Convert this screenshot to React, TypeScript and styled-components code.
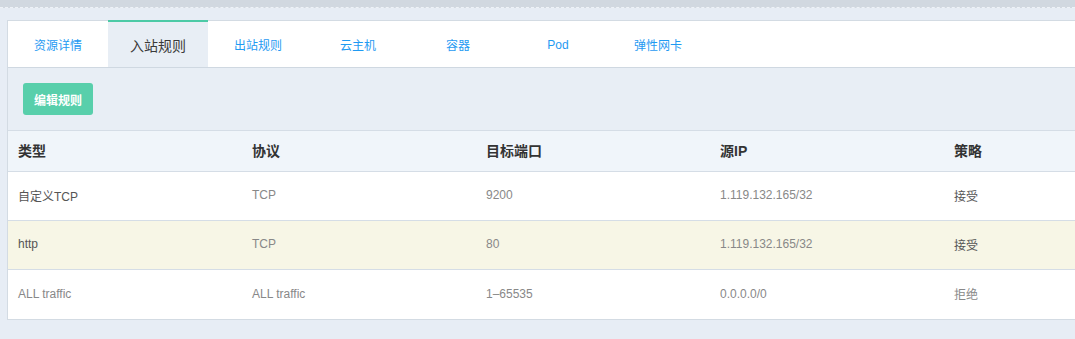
import styled, { createGlobalStyle } from "styled-components";

const GlobalStyle = createGlobalStyle`
  html, body {
    margin: 0;
    padding: 0;
    background: #e7edf5;
    overflow: hidden;
    font-family: "Liberation Sans", "Noto Sans CJK SC", sans-serif;
  }
`;

const tabs = ["资源详情", "入站规则", "出站规则", "云主机", "容器", "Pod", "弹性网卡"];

interface IRule {
  type: string;
  protocol: string;
  port: string;
  source: string;
  policy: string;
  muted?: boolean;
  hover?: boolean;
}

const rules: IRule[] = [
  { type: "自定义TCP", protocol: "TCP", port: "9200", source: "1.119.132.165/32", policy: "接受" },
  { type: "http", protocol: "TCP", port: "80", source: "1.119.132.165/32", policy: "接受", hover: true },
  { type: "ALL traffic", protocol: "ALL traffic", port: "1–65535", source: "0.0.0.0/0", policy: "拒绝", muted: true },
];

export default function App() {
  return (
    <>
      <GlobalStyle />
      <TopStrip />
      <Page>
        <Panel>
          <TabBar>
            {tabs.map((t, i) => (
              <Tab key={t} $active={i === 1}>
                {t}
              </Tab>
            ))}
          </TabBar>
          <Toolbar>
            <EditButton>编辑规则</EditButton>
          </Toolbar>
          <Table>
            <thead>
              <tr>
                <Th>类型</Th>
                <Th>协议</Th>
                <Th>目标端口</Th>
                <Th>源IP</Th>
                <Th>策略</Th>
              </tr>
            </thead>
            <tbody>
              {rules.map((r, i) => (
                <Row key={i} $hover={r.hover}>
                  <Td $dark={!r.muted}>{r.type}</Td>
                  <Td>{r.protocol}</Td>
                  <Td>{r.port}</Td>
                  <Td>{r.source}</Td>
                  <Td $dark={!r.muted}>{r.policy}</Td>
                </Row>
              ))}
            </tbody>
          </Table>
        </Panel>
      </Page>
    </>
  );
}

const TopStrip = styled.div`
  height: 7px;
  background: #d1d8e0;
  border-bottom: 1px dashed #eef2f7;
`;

const Page = styled.main`
  padding: 12px 0 20px 7px;
  overflow: hidden;
`;

const Panel = styled.section`
  width: 1180px;
  background: #e8eef5;
  border: 1px solid #d3dbe3;
`;

const TabBar = styled.nav`
  display: flex;
  height: 46px;
  background: #fff;
  border-bottom: 1px solid #cfd8e1;
`;

const Tab = styled.div<{ $active?: boolean }>`
  width: 100px;
  box-sizing: border-box;
  display: flex;
  align-items: center;
  justify-content: center;
  font-size: ${(p) => (p.$active ? "14px" : "12px")};
  color: ${(p) => (p.$active ? "#3a3a3a" : "#1f9af2")};
  background: ${(p) => (p.$active ? "#e8eef5" : "transparent")};
  border-top: 2px solid ${(p) => (p.$active ? "#4ccaa6" : "transparent")};
  height: 47px;
  margin-top: -1px;
  cursor: pointer;
`;

const Toolbar = styled.div`
  padding: 15px;
`;

const EditButton = styled.button`
  height: 32px;
  padding: 0 11px;
  border: none;
  border-radius: 3px;
  background: #58cfab;
  color: #fff;
  font-family: inherit;
  font-size: 12px;
  font-weight: bold;
  display: block;
`;

const Table = styled.table`
  width: 1170px;
  border-collapse: collapse;
  table-layout: fixed;
  border-top: 1px solid #d5dde6;
`;

const Th = styled.th`
  width: 214px;
  height: 38px;
  padding: 0 10px 2px;
  text-align: left;
  background: #f0f5fa;
  color: #333;
  font-size: 14px;
  font-weight: bold;
  border-bottom: 1px solid #d5dde6;
`;

const Row = styled.tr<{ $hover?: boolean }>`
  background: ${(p) => (p.$hover ? "#f7f6e6" : "#fff")};
  &:not(:last-child) td {
    border-bottom: 1px solid #d5dde6;
  }
  &:last-child td {
    height: 47px;
  }
`;

const Td = styled.td<{ $dark?: boolean }>`
  height: 46px;
  padding: 0 10px 2px;
  font-size: 12px;
  color: ${(p) => (p.$dark ? "#555" : "#888")};
`;
